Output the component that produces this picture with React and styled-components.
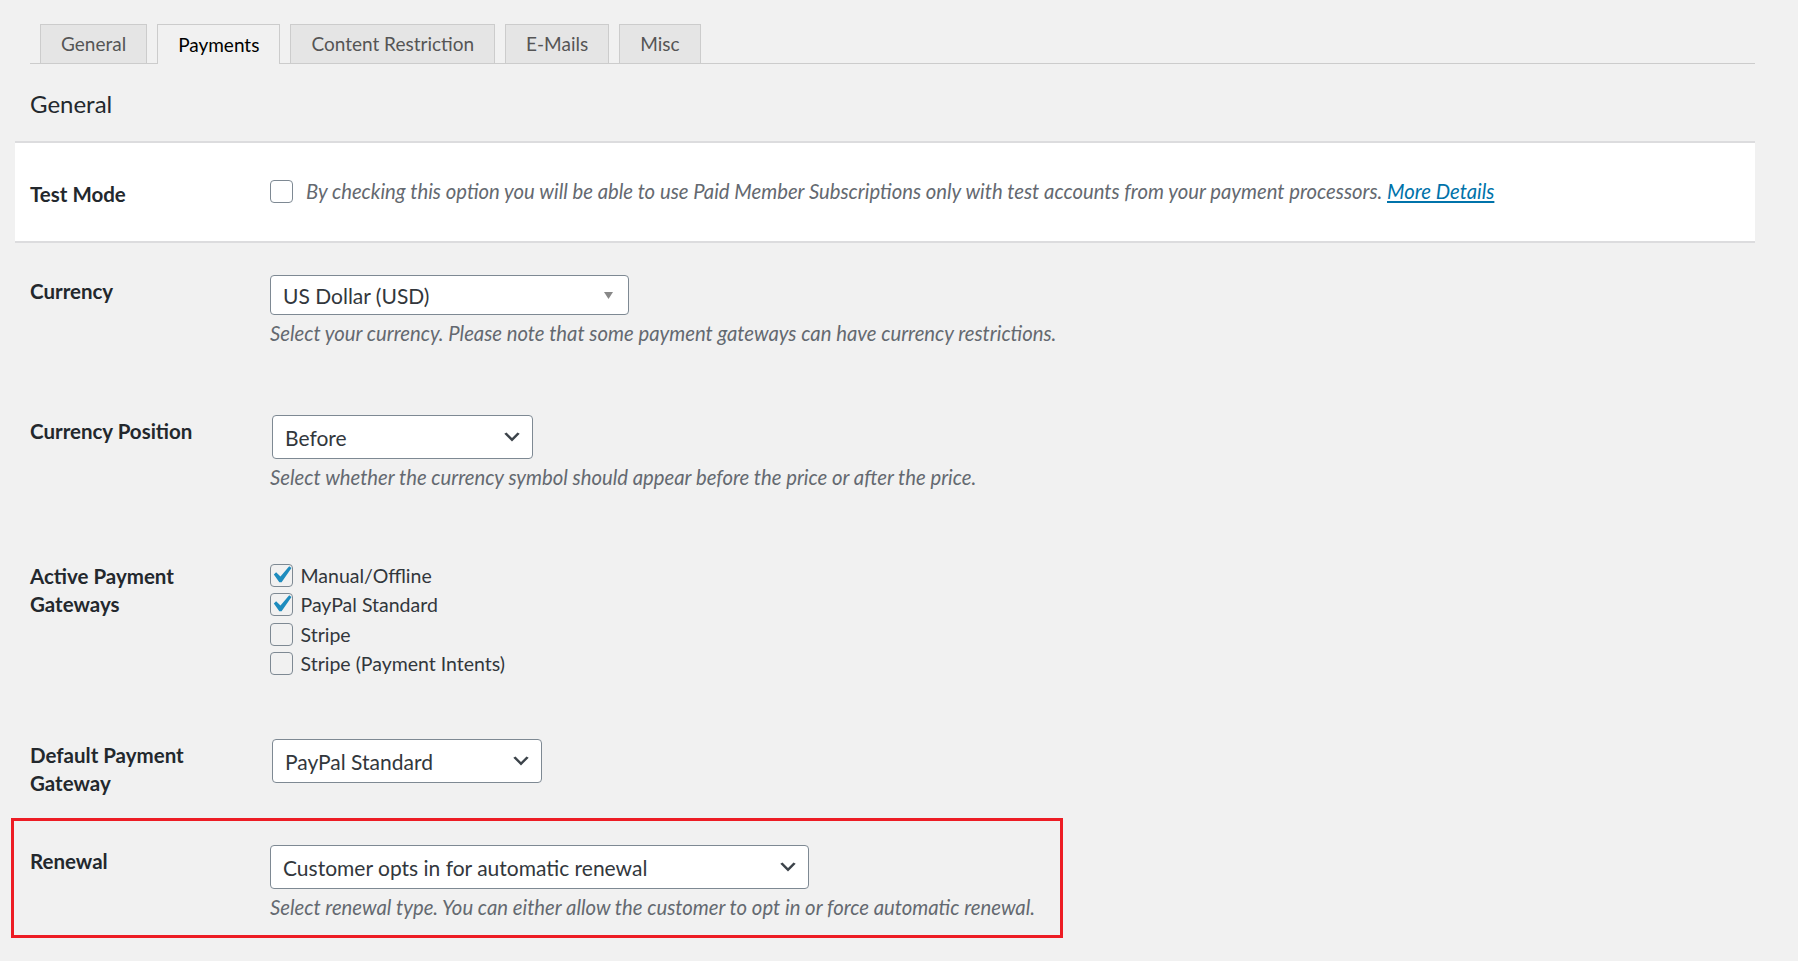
import React from 'react';
import styled, { createGlobalStyle } from 'styled-components';

const GlobalStyle = createGlobalStyle`
  html, body { margin: 0; padding: 0; background: #f1f1f1; }
  body {
    font-family: Lato, "Segoe UI", "Open Sans", sans-serif;
    color: #23282d;
    -webkit-font-smoothing: antialiased;
  }
  * { box-sizing: border-box; }
`;

const Page = styled.div`
  width: 1740px;
  margin-left: 15px;
  padding-top: 23px;
  min-height: 961px;
`;

const TabBar = styled.nav`
  display: flex;
  align-items: flex-end;
  gap: 10px;
  margin-left: 15px;
  padding-left: 10px;
  height: 40.5px;
  border-bottom: 1.5px solid #cccccc;
`;

const Tab = styled.a`
  display: flex;
  align-items: center;
  height: ${(p) => (p.$active ? '40.5px' : '39px')};
  margin-bottom: ${(p) => (p.$active ? '-1.5px' : '0')};
  padding: 0 20px;
  border: 1.5px solid #cccccc;
  border-bottom: none;
  background: ${(p) => (p.$active ? '#f1f1f1' : '#e5e5e5')};
  color: ${(p) => (p.$active ? '#000000' : '#555555')};
  font-size: 19px;
  line-height: 1;
  text-decoration: none;
  cursor: pointer;
`;

const Heading = styled.h2`
  margin: 24px 0 0;
  padding-left: 15px;
  font-size: 24px;
  font-weight: 400;
  line-height: 31px;
  color: #23282d;
`;

const Panel = styled.section`
  margin-top: 22.7px;
  background: #ffffff;
  border-top: 2px solid #dcdcde;
  border-bottom: 2px solid #dcdcde;
`;

const Row = styled.div`
  display: grid;
  grid-template-columns: 240px 1fr;
  align-items: start;
  padding: ${(p) => p.$pt || 0}px 0 ${(p) => p.$pb || 0}px 15px;
`;

const Label = styled.div`
  max-width: 185px;
  padding-top: 3px;
  font-size: 20.5px;
  font-weight: 700;
  line-height: 27.3px;
  color: #23282d;
`;

const Field = styled.div`
  display: flex;
  flex-direction: column;
  align-items: flex-start;
`;

const Description = styled.p`
  margin: ${(p) => (p.$inline ? '0' : '5px 0 11.5px')};
  font-size: 20.3px;
  font-style: italic;
  line-height: 27px;
  color: #646970;
  white-space: nowrap;
`;

const Link = styled.a`
  color: #0073aa;
  text-decoration: underline;
  cursor: pointer;
`;

const InlineOption = styled.div`
  display: flex;
  align-items: center;
  gap: 13px;
  height: 27px;
`;

const CheckList = styled.div`
  display: flex;
  flex-direction: column;
`;

const CheckItem = styled.label`
  display: flex;
  align-items: center;
  gap: 7.5px;
  height: 29.5px;
  font-size: 19.5px;
  color: #32373c;
`;

const Box = styled.span`
  position: relative;
  flex: none;
  width: 23px;
  height: 23px;
  border: 1.5px solid #7e8993;
  border-radius: 4px;
  background: ${(p) => p.$bg || 'transparent'};
`;

const Tick = styled.svg`
  position: absolute;
  left: -7.3px;
  top: -7.1px;
  width: 34px;
  height: 34px;
`;

const SelectBox = styled.div`
  display: flex;
  align-items: center;
  justify-content: space-between;
  width: ${(p) => p.$w}px;
  height: ${(p) => p.$h}px;
  margin-left: ${(p) => p.$shift || 0}px;
  padding: 0 ${(p) => p.$pr || 9}px 0 12px;
  background: #ffffff;
  border: 1.5px solid #7e8993;
  border-radius: 4px;
  font-size: 21px;
  color: #32373c;
`;

const SelectValue = styled.span`
  white-space: nowrap;
  line-height: 1;
`;

const Chevron = styled.svg`
  flex: none;
  width: 22px;
  height: 22px;
`;

const Caret = styled.svg`
  flex: none;
  width: 9px;
  height: 7px;
`;

const Highlight = styled.div`
  width: 1052px;
  margin: 21.3px 0 0 -4px;
  border: 3px solid #ed1c24;
  padding: 24px 0 2.2px 1px;
`;

function Checkbox({ checked, bg }) {
  return (
    <Box $bg={bg}>
      {checked && (
        <Tick viewBox="0 0 20 20">
          <path d="M14.83 4.89l1.34.94-5.81 8.38H9.02L5.78 9.67l1.34-1.25 2.57 2.4z" fill="#1e8cbe" />
        </Tick>
      )}
    </Box>
  );
}

function Select({ value, w, h, shift, caret }) {
  return (
    <SelectBox $w={w} $h={h} $shift={shift} $pr={caret ? 15 : 9}>
      <SelectValue>{value}</SelectValue>
      {caret ? (
        <Caret viewBox="0 0 9 7">
          <polygon points="0,0 9,0 4.5,7" fill="#888888" />
        </Caret>
      ) : (
        <Chevron viewBox="0 0 20 20">
          <path d="M5 6l5 5 5-5 2 1-7 7-7-7 2-1z" fill="#3c434a" />
        </Chevron>
      )}
    </SelectBox>
  );
}

const tabs = ['General', 'Payments', 'Content Restriction', 'E-Mails', 'Misc'];

const gateways = [
  { label: 'Manual/Offline', checked: true },
  { label: 'PayPal Standard', checked: true },
  { label: 'Stripe', checked: false },
  { label: 'Stripe (Payment Intents)', checked: false },
];

export default function App() {
  return (
    <>
      <GlobalStyle />
      <Page>
        <TabBar>
          {tabs.map((t) => (
            <Tab key={t} $active={t === 'Payments'}>
              {t}
            </Tab>
          ))}
        </TabBar>

        <Heading>General</Heading>

        <Panel>
          <Row $pt={34.5} $pb={33.5}>
            <Label>Test Mode</Label>
            <InlineOption>
              <Checkbox bg="#ffffff" />
              <Description $inline>
                By checking this option you will be able to use Paid Member Subscriptions only with test accounts from
                your payment processors. <Link>More Details</Link>
              </Description>
            </InlineOption>
          </Row>
        </Panel>

        <Row $pt={32}>
          <Label>Currency</Label>
          <Field>
            <Select value="US Dollar (USD)" w={359} h={40} caret />
            <Description>
              Select your currency. Please note that some payment gateways can have currency restrictions.
            </Description>
          </Field>
        </Row>

        <Row $pt={56.5}>
          <Label>Currency Position</Label>
          <Field>
            <Select value="Before" w={261} h={43.5} shift={2} />
            <Description>Select whether the currency symbol should appear before the price or after the price.</Description>
          </Field>
        </Row>

        <Row $pt={58}>
          <Label>Active Payment Gateways</Label>
          <CheckList>
            {gateways.map((g) => (
              <CheckItem key={g.label}>
                <Checkbox checked={g.checked} />
                {g.label}
              </CheckItem>
            ))}
          </CheckList>
        </Row>

        <Row $pt={61}>
          <Label>Default Payment Gateway</Label>
          <Field>
            <Select value="PayPal Standard" w={270} h={44} shift={2} />
          </Field>
        </Row>

        <Highlight>
          <Row>
            <Label>Renewal</Label>
            <Field>
              <Select value="Customer opts in for automatic renewal" w={539} h={43.5} />
              <Description>
                Select renewal type. You can either allow the customer to opt in or force automatic renewal.
              </Description>
            </Field>
          </Row>
        </Highlight>
      </Page>
    </>
  );
}
